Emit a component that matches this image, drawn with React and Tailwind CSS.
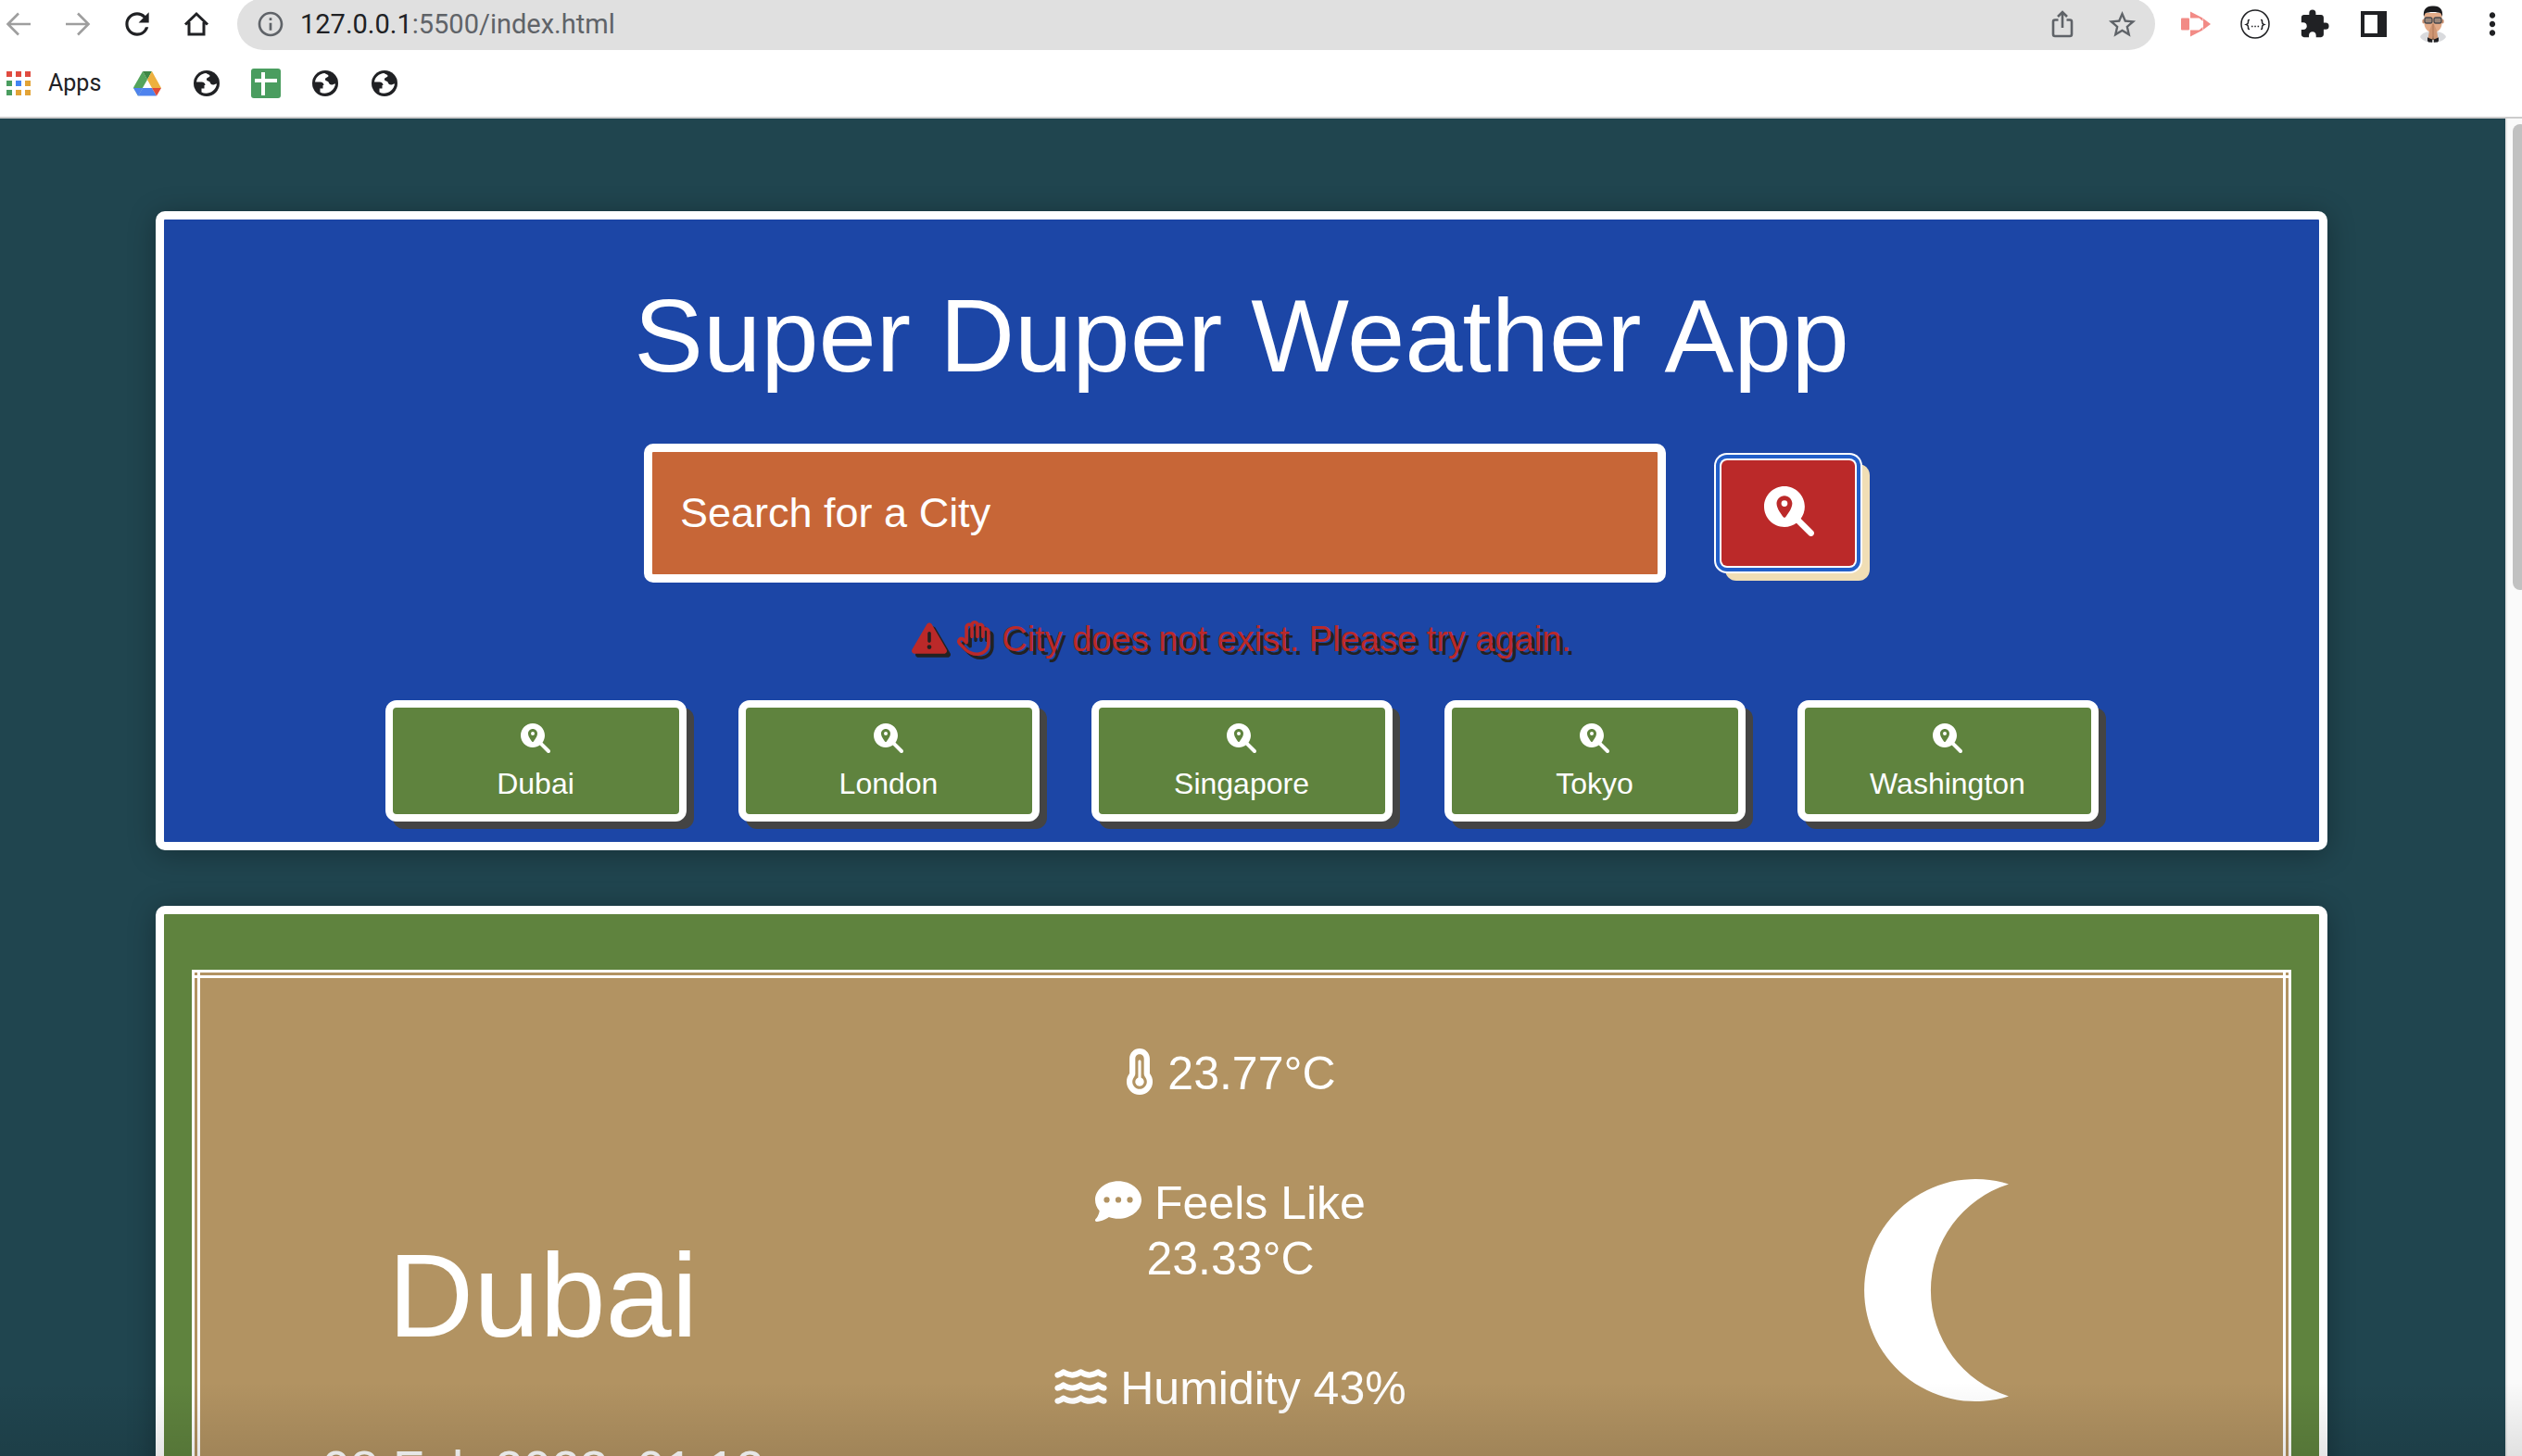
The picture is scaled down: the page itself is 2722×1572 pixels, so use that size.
import React from "react";
import {
  FaMagnifyingGlassLocation,
  FaTriangleExclamation,
  FaRegHand,
  FaCommentDots,
  FaWater,
} from "react-icons/fa6";
import {
  MdRefresh,
  MdInfoOutline,
  MdStarBorder,
  MdExtension,
  MdMoreVert,
} from "react-icons/md";

function BackIcon() {
  return (
    <svg width="28" height="28" viewBox="0 0 28 28" fill="none" stroke="#9e9e9e" strokeWidth="2.6">
      <path d="M27 14H3M14 2.5 2.5 14 14 25.5" />
    </svg>
  );
}

function ForwardIcon() {
  return (
    <svg width="28" height="28" viewBox="0 0 28 28" fill="none" stroke="#9e9e9e" strokeWidth="2.6">
      <path d="M1 14h24M14 2.5 25.5 14 14 25.5" />
    </svg>
  );
}

function HomeIcon() {
  return (
    <svg width="28" height="28" viewBox="0 0 28 28" fill="none" stroke="#202124" strokeWidth="3">
      <path d="M2 14.5 14 3l12 11.5M6 12v13h16V12" />
    </svg>
  );
}

function ShareIcon() {
  return (
    <svg width="24" height="30" viewBox="0 0 24 30" fill="none" stroke="#5f6368" strokeWidth="2.6">
      <path d="M7.5 10.5H4a2 2 0 0 0-2 2V26a2 2 0 0 0 2 2h16a2 2 0 0 0 2-2V12.500a2 2 0 0 0-2-2h-3.500M12 19V2.500M7 7l5-5 5 5" />
    </svg>
  );
}

function RecorderIcon() {
  return (
    <svg width="32" height="28" viewBox="0 0 32 28" fill="#f28b86">
      <rect x="0" y="7.500" width="9" height="13" rx="1" />
      <path d="M10 .5 23.500 7.500V11l-4-3.500H10z" />
      <path d="M10 27.500 23.500 20.500V17l-4 3.500H10z" />
      <path d="M24 8l8 6-8 6z" />
    </svg>
  );
}

function BracesIcon() {
  return (
    <svg width="32" height="32" viewBox="0 0 32 32" fill="none" stroke="#202124" strokeWidth="1.5">
      <circle cx="16" cy="16" r="15" />
      <path d="M10 11.500c-2 0-1.500 1-1.500 2.500S8 16 6.500 16.500C8 17 8.500 17.500 8.500 19s-.5 2.500 1.500 2.500M22 11.500c2 0 1.500 1 1.500 2.500s.5 2 2 2.500c-1.500.5-2 1-2 2.500s.5 2.500-1.500 2.500" />
      <path d="M12 18.500h1.500M15.300 18.500h1.500M18.600 18.500h1.500" />
    </svg>
  );
}

function SidePanelIcon() {
  return (
    <svg width="28" height="28" viewBox="0 0 28 28">
      <rect width="28" height="28" fill="#202124" />
      <rect x="4" y="4" width="14" height="20" fill="#fff" />
    </svg>
  );
}

function AvatarIcon() {
  return (
    <svg width="30" height="40" viewBox="0 0 30 40">
      <path d="M1 34c2-5 7-6 14-6s12 1 14 6c-3 4-8 6-14 6S4 38 1 34z" fill="#d9dadd" />
      <path d="M9 35l6-3 6 3-1 4.500H10z" fill="#222" />
      <ellipse cx="4.800" cy="17" rx="1.500" ry="2.500" fill="#c98f6e" />
      <ellipse cx="25.200" cy="17" rx="1.500" ry="2.500" fill="#c98f6e" />
      <path d="M5.500 8h19v11c0 6-4 10-9.500 10s-9.500-4-9.500-10z" fill="#e3ab88" />
      <path d="M5 12C4 4 8 0 15 .5 22 0 26 4 25 12l-1.500-3.500C20 6.500 10 6.500 6.500 8.500z" fill="#1b1b1d" />
      <rect x="6" y="13" width="8" height="6" rx="2" fill="#9a8578" stroke="#4a4a4d" strokeWidth="1.3" />
      <rect x="16" y="13" width="8" height="6" rx="2" fill="#9a8578" stroke="#4a4a4d" strokeWidth="1.3" />
      <path d="M14.500 19l-3.500 8-1.500 9 5 1 .5-4 .5 4 5-1-1.500-9-3.500-8z" fill="#cf9673" />
      <path d="M15 20v14" stroke="#a86f50" strokeWidth=".8" />
      <path d="M9 34.500l5 2v3l-5-1zM21 34.500l-5 2v3l5-1z" fill="#1f1f22" />
      <path d="M14.300 37h1.400v3h-1.400z" fill="#fff" />
    </svg>
  );
}

function DriveIcon() {
  return (
    <svg width="30" height="27" viewBox="0 0 30 27">
      <path d="M10 0 0 17.500 5 26.500 15 9z" fill="#54a45c" />
      <path d="M10 0h10l-5 9z" fill="#3f8744" />
      <path d="M15 9 20 0l10 18H20z" fill="#edb03f" />
      <path d="M10 18h10l5 8.500H5z" fill="#4f83ee" />
      <path d="M0 18h10l-5 8.500z" fill="#4f83ee" />
      <path d="M20 18h10l-5 8.500z" fill="#e04b38" />
    </svg>
  );
}

function GlobeIcon() {
  return (
    <svg width="28" height="28" viewBox="0 0 28 28">
      <circle cx="14" cy="14" r="14" fill="#202124" />
      <path d="M13.500 3C8 3.500 3.800 7 3 12.500h5.500c2.500 0 4 1.500 4 3.500h-1v3.500h-3v4c6 3.500 15.500-.5 16.500-9-1.500-.5-2 1-4 1-2.500 0-3-1.500-3.500-3-.4-1.200-3-.5-3.500-2.500-.5-2.500 3-2 3.500-4 .3-1.300-2-1.500-4-3z" fill="#fff" />
    </svg>
  );
}

function SheetIcon() {
  return (
    <svg width="32" height="32" viewBox="0 0 32 32">
      <rect width="32" height="32" rx="3" fill="#4a9d5f" />
      <path d="M11 4h4v7h13v4H15v14h-4V15H4v-4h7z" fill="#fff" />
    </svg>
  );
}

function AppsGridIcon() {
  const colors = [
    "#e04b40", "#e04b40", "#e04b40",
    "#4a9d5f", "#4285f4", "#e2a336",
    "#4a9d5f", "#e2a336", "#e2a336",
  ];
  return (
    <svg width="26" height="26" viewBox="0 0 26 26">
      {colors.map((c, i) => (
        <rect key={i} x={(i % 3) * 10} y={Math.floor(i / 3) * 10} width="6" height="6" fill={c} />
      ))}
    </svg>
  );
}

function ThermometerIcon() {
  return (
    <svg className="inline h-[50px] w-[32px] align-[-0.125em]" viewBox="0 0 320 512" fill="currentColor">
      <path d="M160 64c-26.500 0-48 21.500-48 48V276.500c0 17.300-7.100 31.900-15.300 42.500C86.200 332.600 80 349.500 80 368c0 44.200 35.800 80 80 80s80-35.800 80-80c0-18.500-6.200-35.400-16.700-48.900c-8.200-10.600-15.300-25.200-15.300-42.500V112c0-26.500-21.500-48-48-48zM48 112C48 50.200 98.100 0 160 0s112 50.100 112 112V276.500c0 .1 .1 .3 .2 .6c.2 .6 .8 1.600 1.700 2.800c18.900 24.400 30.100 55 30.100 88.100c0 79.500-64.500 144-144 144S16 447.500 16 368c0-33.200 11.200-63.800 30.100-88.100c.9-1.200 1.500-2.200 1.700-2.800c.1-.3 .2-.5 .2-.6V112zM208 368c0 26.500-21.500 48-48 48s-48-21.500-48-48c0-20.900 13.400-38.700 32-45.300V144c0-8.800 7.200-16 16-16s16 7.200 16 16V322.700c18.600 6.600 32 24.400 32 45.300z" />
    </svg>
  );
}

function MoonIcon() {
  return (
    <svg width="156" height="240" viewBox="0 0 156 240" fill="currentColor" role="img" aria-label="Clear night">
      <path d="M156 5.500A120 120 0 1 0 156 234.500A120 120 0 0 1 156 5.500z" />
    </svg>
  );
}

function ChromeButton({ label, children }) {
  return (
    <button type="button" aria-label={label} className="flex h-10 w-10 shrink-0 items-center justify-center text-[#202124]">
      {children}
    </button>
  );
}

function BrowserChrome() {
  return (
    <header className="shrink-0 border-b-2 border-[#cccccc] bg-white font-[Roboto,sans-serif]">
      <div className="-mt-0.5 flex h-14 items-center gap-6 pr-3">
        <ChromeButton label="Back"><BackIcon /></ChromeButton>
        <ChromeButton label="Forward"><ForwardIcon /></ChromeButton>
        <ChromeButton label="Reload"><MdRefresh size={38} /></ChromeButton>
        <ChromeButton label="Home"><HomeIcon /></ChromeButton>
        <div className="flex h-14 flex-1 items-center rounded-full bg-[#e0e0e0] pr-4">
          <span className="flex w-[68px] justify-center pl-1 text-[#5f6368]"><MdInfoOutline size={32} /></span>
          <p className="flex-1 text-[29px] leading-8 text-[#5f6368]">
            <span className="text-[#202124]">127.0.0.1</span>:5500/index.html
          </p>
          <div className="flex items-center gap-6">
            <ChromeButton label="Share"><ShareIcon /></ChromeButton>
            <ChromeButton label="Bookmark"><MdStarBorder size={35} color="#5f6368" /></ChromeButton>
          </div>
        </div>
        <ChromeButton label="Screen recorder"><RecorderIcon /></ChromeButton>
        <ChromeButton label="JSON viewer"><BracesIcon /></ChromeButton>
        <ChromeButton label="Extensions"><MdExtension size={34} /></ChromeButton>
        <ChromeButton label="Side panel"><SidePanelIcon /></ChromeButton>
        <ChromeButton label="Profile"><AvatarIcon /></ChromeButton>
        <ChromeButton label="Menu"><MdMoreVert size={38} /></ChromeButton>
      </div>
      <nav className="flex h-[72px] items-center gap-6">
        <button type="button" className="flex items-center gap-3 pr-1.5 text-[#202124]">
          <span className="flex w-10 justify-center"><AppsGridIcon /></span>
          <span className="text-[25px] leading-8">Apps</span>
        </button>
        <ChromeButton label="Drive"><DriveIcon /></ChromeButton>
        <ChromeButton label="Site bookmark 1"><GlobeIcon /></ChromeButton>
        <ChromeButton label="Sheets"><SheetIcon /></ChromeButton>
        <ChromeButton label="Site bookmark 2"><GlobeIcon /></ChromeButton>
        <ChromeButton label="Site bookmark 3"><GlobeIcon /></ChromeButton>
      </nav>
    </header>
  );
}

const CITIES = ["Dubai", "London", "Singapore", "Tokyo", "Washington"];

function SearchCard() {
  return (
    <section className="rounded-[10px] border-[9px] border-white bg-[#1c46a6] pb-[22px] pt-[62px] shadow-[0_4px_30px_rgba(0,0,0,0.3)]">
      <h1 className="text-center text-[112px] leading-[128px]">Super Duper Weather App</h1>
      <form className="mx-auto mt-[52px] flex w-[1324px] max-w-full items-center gap-[60px] pl-[17px]" onSubmit={(e) => e.preventDefault()}>
        <input
          type="text"
          aria-label="Search for a City"
          placeholder="Search for a City"
          className="h-[150px] min-w-0 flex-1 rounded-[10px] border-[9px] border-white bg-[#c76637] px-[30px] text-[45px] text-white outline-none placeholder:text-white placeholder:opacity-100"
        />
        <button
          type="submit"
          aria-label="Search"
          className="rounded-[6px] bg-[#bb2929] pb-8 pl-[46px] pr-11 pt-7 shadow-[0_0_0_2px_#fff,0_0_0_6px_#225fc9,0_0_0_8px_#fff,10px_10px_0_6px_#f0deb5]"
        >
          <FaMagnifyingGlassLocation size={54} />
        </button>
      </form>
      <p className="mt-[37px] text-center text-[38px] leading-[48px] text-[#bb2929] [text-shadow:4px_4px_0_#222]">
        <FaTriangleExclamation className="inline align-[-0.125em] [filter:drop-shadow(4px_4px_0_#222)]" />{" "}
        <FaRegHand className="inline align-[-0.125em] [filter:drop-shadow(4px_4px_0_#222)]" />{" "}
        City does not exist. Please try again.
      </p>
      <div className="mt-[42px] flex justify-center gap-14">
        {CITIES.map((city) => (
          <button
            key={city}
            type="button"
            className="flex w-[325px] flex-col items-center gap-[13px] rounded-xl border-8 border-white bg-[#5f833e] pb-[13px] pt-[17px] shadow-[8px_8px_0_#444]"
          >
            <FaMagnifyingGlassLocation size={32} />
            <span className="text-[32px] leading-10">{city}</span>
          </button>
        ))}
      </div>
    </section>
  );
}

function WeatherCard() {
  return (
    <section className="mt-[60px] rounded-[10px] border-[9px] border-white bg-[#5f833e] px-[30px] pb-[60px] pt-[60px] shadow-[0_4px_30px_rgba(0,0,0,0.3)]">
      <div className="border-[3px] border-white bg-[#b29362] bg-[linear-gradient(#fff,#fff),linear-gradient(#fff,#fff),linear-gradient(#fff,#fff)] bg-no-repeat p-1.5 [background-position:3px_0,calc(100%_-_3px)_0,0_3px] [background-size:3px_100%,3px_100%,100%_3px]">
        <div className="grid grid-cols-[740fr_744fr_764fr] pb-20 text-center">
          <div className="pt-[271px]">
            <h2 className="text-[128px] leading-[144px]">Dubai</h2>
            <p className="mt-[83px] text-[55px] leading-[64px]">08 Feb 2023, 01:12</p>
          </div>
          <div className="flex flex-col gap-20 pt-[73px] text-[50px] leading-[60px]">
            <p><ThermometerIcon /> 23.77°C</p>
            <p>
              <FaCommentDots className="inline align-[-0.125em]" /> Feels Like
              <br />
              23.33°C
            </p>
            <p><FaWater className="inline h-[50px] w-[57px] align-[-0.125em]" /> Humidity 43%</p>
          </div>
          <div className="flex justify-center pl-4 pt-[217px]">
            <MoonIcon />
          </div>
        </div>
      </div>
    </section>
  );
}

export default function App() {
  return (
    <div className="relative flex h-screen flex-col overflow-hidden font-['Liberation_Sans',Arial,sans-serif]">
      <BrowserChrome />
      <div className="flex min-h-0 flex-1">
        <main className="min-w-0 flex-1 overflow-hidden bg-[#20454f] pl-[168px] pr-[192px] pt-[100px] text-white">
          <SearchCard />
          <WeatherCard />
        </main>
        <aside className="w-[18px] shrink-0 overflow-hidden border-l-2 border-[#e8e8e8] bg-[#fafafa] pl-1.5 pt-1.5">
          <div className="h-[35%] w-4 rounded-full bg-[#c1c1c1]" />
        </aside>
      </div>
      <div className="pointer-events-none absolute inset-x-0 bottom-0 h-20 bg-gradient-to-b from-transparent to-black/10" />
    </div>
  );
}
